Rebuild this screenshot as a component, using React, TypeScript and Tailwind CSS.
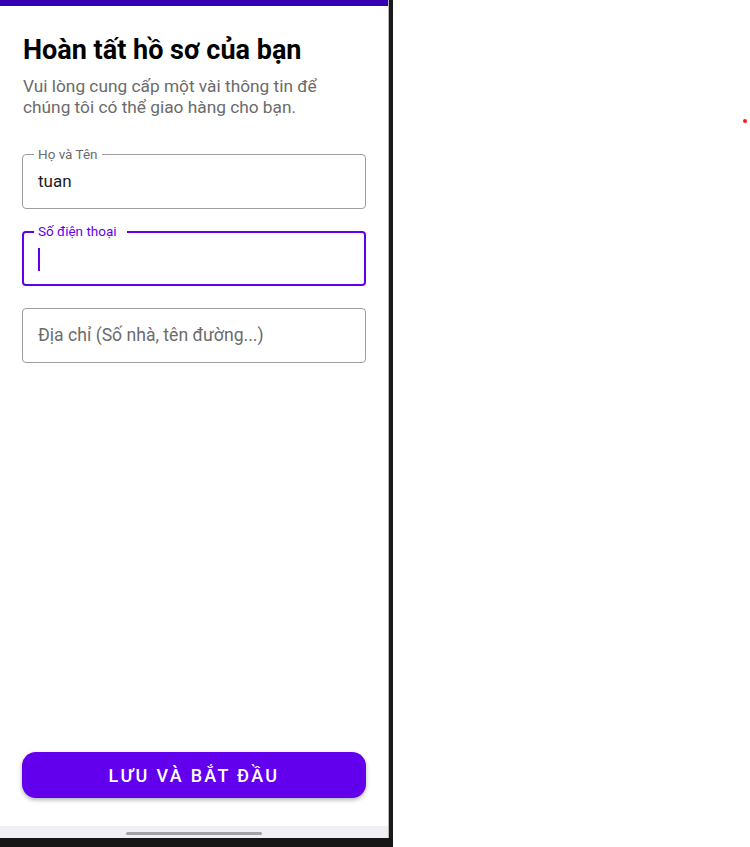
export default function App() {
  return (
    <div
      className="flex h-[847px] w-[750px] bg-white overflow-hidden"
      style={{ fontFamily: 'Roboto, "Noto Sans", sans-serif' }}
    >
      {/* Phone screen */}
      <div className="flex flex-col w-[393px] h-full">
        <div className="flex flex-1 min-h-0">
          <div className="flex flex-col w-[388px] h-full">
            {/* status bar */}
            <div className="h-[6px] bg-[#3700b3]" />

            <div className="flex flex-col flex-1 px-[22px] pt-[28px] pb-[28px]">
              <h1 className="text-[27px] leading-[32px] font-bold text-black ml-px">Hoàn tất hồ sơ của bạn</h1>
              <p className="mt-[10px] text-[17.3px] leading-[21px] text-[#6b6b6b] ml-px">
                Vui lòng cung cấp một vài thông tin để
                <br />
                chúng tôi có thể giao hàng cho bạn.
              </p>

              <div className="mt-[36px] flex flex-col gap-[22px]">
                {/* Name field */}
                <div className="relative h-[55px] rounded-[4px] border border-[#9e9e9e] flex items-center px-[15px]">
                  <span className="absolute -top-[9px] left-[11px] bg-white px-[4px] text-[13.5px] leading-[16px] text-[#6b6b6b]">
                    Họ và Tên
                  </span>
                  <span className="text-[17px] text-[#1c1c1c]">tuan</span>
                </div>

                {/* Phone field (focused) */}
                <div className="relative h-[55px] rounded-[4px] border-2 border-[#6200ee] flex items-center px-[14px]">
                  <span className="absolute -top-[10px] left-[10px] bg-white pl-[4px] pr-[10px] text-[13.5px] leading-[16px] text-[#6200ee]">
                    Số điện thoại
                  </span>
                  <span className="w-[2px] h-[23px] bg-[#6200ee] mt-[1px]" />
                </div>

                {/* Address field */}
                <div className="relative h-[55px] rounded-[4px] border border-[#9e9e9e] flex items-center px-[15px]">
                  <span className="text-[17.6px] text-[#6b6b6b]">Địa chỉ (Số nhà, tên đường...)</span>
                </div>
              </div>

              <div className="flex-1" />

              <button className="h-[46px] w-full rounded-[14px] bg-[#6200ee] text-white text-[18px] font-medium tracking-[2.3px] shadow-[0_2px_4px_rgba(0,0,0,0.3)]">
                LƯU VÀ BẮT ĐẦU
              </button>
            </div>

            {/* nav bar */}
            <div className="h-[12px] bg-[#f0eff4] flex justify-center pt-[6px]">
              <div className="w-[136px] h-[3px] rounded-full bg-[#a3a3a6]" />
            </div>
          </div>
          <div className="w-[1px] bg-[#b5b5b5]" />
          <div className="w-[4px] bg-[#1a1a1a]" />
        </div>
        <div className="h-[9px] bg-[#161616]" />
      </div>

      {/* Right blank area */}
      <div className="flex-1 pt-[119px] flex justify-end pr-[3px]">
        <div className="w-[4px] h-[4px] rounded-full bg-[#ff1a1a]" />
      </div>
    </div>
  );
}
